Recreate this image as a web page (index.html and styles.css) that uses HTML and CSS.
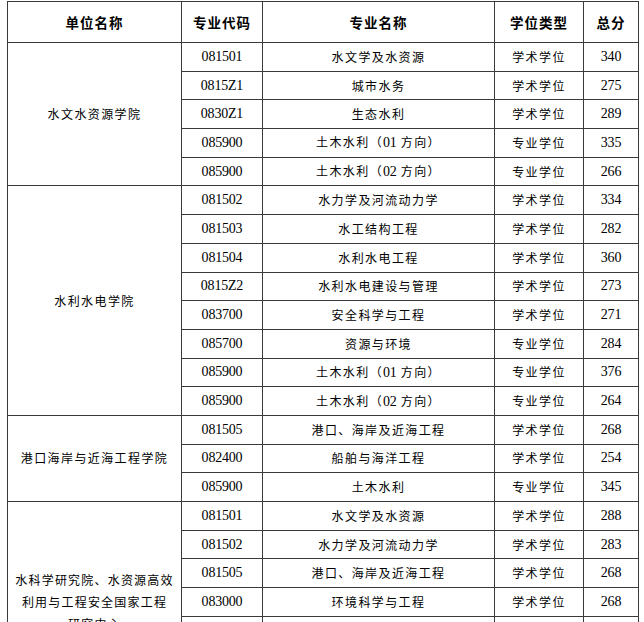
FILE: index.html
```html
<!DOCTYPE html>
<html lang="zh-CN">
<head>
<meta charset="utf-8">
<title>复试分数线</title>
<link rel="stylesheet" href="styles.css">
</head>
<body>
<table class="grid">
  <colgroup>
    <col class="c-unit"><col class="c-code"><col class="c-name"><col class="c-type"><col class="c-score">
  </colgroup>
  <thead>
    <tr class="head">
      <th>单位名称</th><th>专业代码</th><th>专业名称</th><th>学位类型</th><th>总分</th>
    </tr>
  </thead>
  <tbody>
    <tr><td class="unit" rowspan="5">水文水资源学院</td><td class="num">081501</td><td>水文学及水资源</td><td>学术学位</td><td class="num">340</td></tr>
    <tr><td class="num">0815Z1</td><td>城市水务</td><td>学术学位</td><td class="num">275</td></tr>
    <tr class="soft"><td class="num">0830Z1</td><td>生态水利</td><td>学术学位</td><td class="num">289</td></tr>
    <tr><td class="num">085900</td><td>土木水利（<span class="num">01</span> 方向）</td><td>专业学位</td><td class="num">335</td></tr>
    <tr><td class="num">085900</td><td>土木水利（<span class="num">02</span> 方向）</td><td>专业学位</td><td class="num">266</td></tr>

    <tr class="soft"><td class="unit" rowspan="8">水利水电学院</td><td class="num">081502</td><td>水力学及河流动力学</td><td>学术学位</td><td class="num">334</td></tr>
    <tr><td class="num">081503</td><td>水工结构工程</td><td>学术学位</td><td class="num">282</td></tr>
    <tr><td class="num">081504</td><td>水利水电工程</td><td>学术学位</td><td class="num">360</td></tr>
    <tr><td class="num">0815Z2</td><td>水利水电建设与管理</td><td>学术学位</td><td class="num">273</td></tr>
    <tr><td class="num">083700</td><td>安全科学与工程</td><td>学术学位</td><td class="num">271</td></tr>
    <tr><td class="num">085700</td><td>资源与环境</td><td>专业学位</td><td class="num">284</td></tr>
    <tr><td class="num">085900</td><td>土木水利（<span class="num">01</span> 方向）</td><td>专业学位</td><td class="num">376</td></tr>
    <tr><td class="num">085900</td><td>土木水利（<span class="num">02</span> 方向）</td><td>专业学位</td><td class="num">264</td></tr>

    <tr><td class="unit" rowspan="3">港口海岸与近海工程学院</td><td class="num">081505</td><td>港口、海岸及近海工程</td><td>学术学位</td><td class="num">268</td></tr>
    <tr><td class="num">082400</td><td>船舶与海洋工程</td><td>学术学位</td><td class="num">254</td></tr>
    <tr class="soft"><td class="num">085900</td><td>土木水利</td><td>专业学位</td><td class="num">345</td></tr>

    <tr><td class="unit multi" rowspan="7">水科学研究院、水资源高效<br>利用与工程安全国家工程<br>研究中心</td><td class="num">081501</td><td>水文学及水资源</td><td>学术学位</td><td class="num">288</td></tr>
    <tr><td class="num">081502</td><td>水力学及河流动力学</td><td>学术学位</td><td class="num">283</td></tr>
    <tr class="soft"><td class="num">081505</td><td>港口、海岸及近海工程</td><td>学术学位</td><td class="num">268</td></tr>
    <tr><td class="num">083000</td><td>环境科学与工程</td><td>学术学位</td><td class="num">268</td></tr>
    <tr><td class="num">083700</td><td>安全科学与工程</td><td>学术学位</td><td class="num">270</td></tr>
    <tr><td class="num">085700</td><td>资源与环境</td><td>专业学位</td><td class="num">280</td></tr>
    <tr><td class="num">085900</td><td>土木水利</td><td>专业学位</td><td class="num">300</td></tr>
  </tbody>
</table>
</body>
</html>
```
FILE: styles.css
```css
html, body {
  margin: 0;
  padding: 0;
  background: #fff;
}
body {
  padding: 1px 0 0 7px;
  color: #000;
  font-family: "Liberation Serif", "Noto Sans CJK SC", serif;
}
.grid {
  border-collapse: collapse;
  table-layout: fixed;
  width: 631px;
}
.c-unit { width: 174px; }
.c-code { width: 81px; }
.c-name { width: 232px; }
.c-type { width: 89px; }
.c-score { width: 55px; }

.grid th,
.grid td {
  border: 1px solid #3a3a3a;
  padding: 0;
  text-align: center;
  vertical-align: middle;
  white-space: nowrap;
  overflow: hidden;
}
.grid th {
  height: 40px;
  font-family: "Noto Sans CJK SC", sans-serif;
  font-weight: 700;
  font-size: 13.5px;
  letter-spacing: 1px;
}
.grid tbody tr {
  height: 28.7px;
}
.grid td {
  font-family: "Noto Sans CJK SC", sans-serif;
  font-size: 12px;
  letter-spacing: 1.4px;
  line-height: 16px;
}
.grid td.num,
.grid .num {
  font-family: "Liberation Serif", serif;
  font-size: 14px;
  letter-spacing: -0.2px;
}
.grid tr.soft > td:not(.unit) {
  border-top-color: #8a8a8a;
}
.grid td.multi {
  line-height: 21.7px;
  letter-spacing: 1.2px;
}
```
